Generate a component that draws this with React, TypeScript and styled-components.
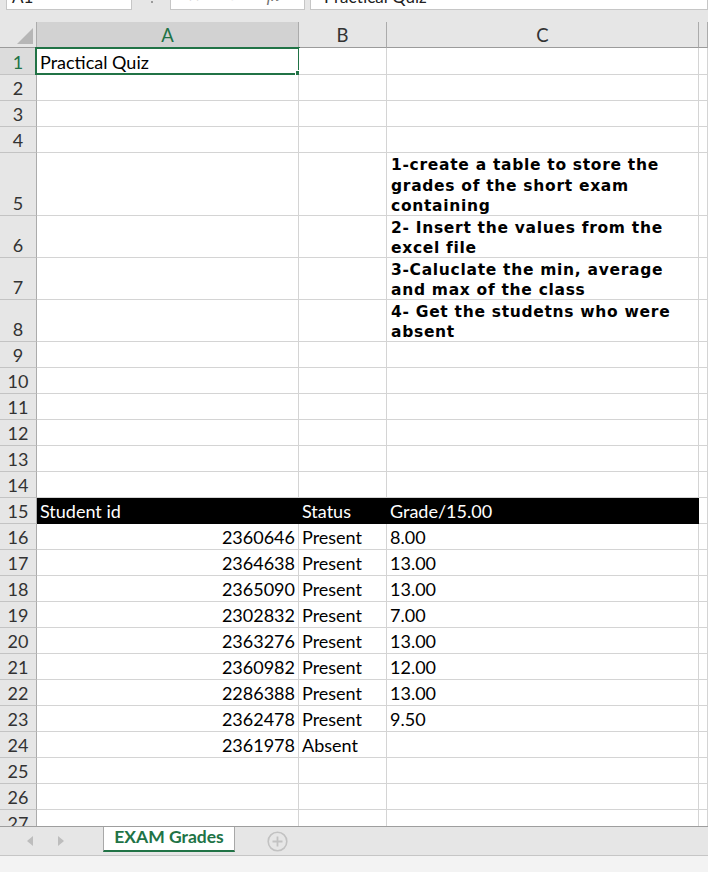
import React from "react";
import styled, { createGlobalStyle } from "styled-components";

const GREEN = "#217346";
const GRID = "#d4d4d4";
const HEAD_BG = "#e6e6e6";
const HEAD_SEL = "#d2d2d2";
const CELL_FONT = `Lato, "Open Sans", "Liberation Sans", sans-serif`;
const COLS = "37px 262px 88px 312px 1fr";

const GlobalStyle = createGlobalStyle`
  html, body { margin: 0; padding: 0; background: ${HEAD_BG}; overflow: hidden; }
  #root { width: 708px; height: 872px; }
`;

const Window = styled.div`
  width: 708px;
  height: 872px;
  display: flex;
  flex-direction: column;
  background: ${HEAD_BG};
  font-family: ${CELL_FONT};
  overflow: hidden;
`;

/* ---------- formula bar (cut off at the top) ---------- */
const FormulaBar = styled.div`
  flex: none;
  height: 10px;
  margin-bottom: 12px;
  display: flex;
  align-items: flex-end;
  overflow: hidden;
`;

const BarBox = styled.div<{ $w?: number; $ml: number }>`
  flex: ${(p) => (p.$w ? "none" : "1")};
  width: ${(p) => (p.$w ? `${p.$w}px` : "auto")};
  margin-left: ${(p) => p.$ml}px;
  height: 28px;
  box-sizing: border-box;
  background: #fff;
  border: 1px solid #c6c6c6;
  display: flex;
  align-items: center;
  font-size: 17px;
  color: #222;
`;

const BarText = styled.span<{ $pl: number }>`
  padding-left: ${(p) => p.$pl}px;
  white-space: nowrap;
`;

const Grip = styled.div`
  flex: none;
  width: 0;
  height: 18px;
  margin: 0 0 7px 19px;
  border-left: 2px dotted #9a9a9a;
`;

const BarIcon = styled.span<{ $w: number; $c: string }>`
  width: ${(p) => p.$w}px;
  flex: none;
  text-align: center;
  color: ${(p) => p.$c};
  font-size: 16px;
  font-family: "DejaVu Sans", sans-serif;
`;

const FxText = styled.span`
  width: 40px;
  flex: none;
  text-align: center;
  font-family: "Liberation Serif", serif;
  font-style: italic;
  font-size: 17px;
  color: #6e6e6e;
`;

/* ---------- sheet ---------- */
const Sheet = styled.div`
  flex: none;
  height: 804px;
  overflow: hidden;
  background: #fff;
`;

const HeaderRow = styled.div`
  display: grid;
  grid-template-columns: ${COLS};
  height: 26px;
  background: ${HEAD_BG};
`;

const Corner = styled.div`
  box-sizing: border-box;
  border-right: 1px solid #ababab;
  border-bottom: 1px solid #9b9b9b;
  position: relative;
`;

const CornerTriangle = styled.svg`
  position: absolute;
  left: 16px;
  top: 6px;
`;

const ColHead = styled.div<{ $sel?: boolean }>`
  box-sizing: border-box;
  background: ${(p) => (p.$sel ? HEAD_SEL : HEAD_BG)};
  border-right: 1px solid #ababab;
  border-bottom: 1px solid #9b9b9b;
  display: flex;
  align-items: flex-end;
  justify-content: center;
  padding-bottom: 1px;
  font-size: 18.5px;
  line-height: 21px;
  color: ${(p) => (p.$sel ? GREEN : "#333")};
`;

const SheetRow = styled.div<{ $h: number }>`
  display: grid;
  grid-template-columns: ${COLS};
  height: ${(p) => p.$h}px;
`;

const RowHead = styled.div<{ $sel?: boolean }>`
  box-sizing: border-box;
  background: ${(p) => (p.$sel ? "#dcdcdc" : HEAD_BG)};
  border-right: 1px solid #ababab;
  border-bottom: 1px solid #c3c3c3;
  display: flex;
  align-items: flex-end;
  justify-content: center;
  padding-bottom: 2px;
  font-size: 18px;
  line-height: 20px;
  color: ${(p) => (p.$sel ? GREEN : "#333")};
`;

const Cell = styled.div<{ $align?: "left" | "right"; $dark?: boolean }>`
  position: relative;
  box-sizing: border-box;
  border-right: 1px solid ${(p) => (p.$dark ? "#000" : GRID)};
  border-bottom: 1px solid ${(p) => (p.$dark ? "#000" : GRID)};
  background: ${(p) => (p.$dark ? "#000" : "#fff")};
  color: ${(p) => (p.$dark ? "#fff" : "#000")};
  display: flex;
  align-items: flex-end;
  justify-content: ${(p) => (p.$align === "right" ? "flex-end" : "flex-start")};
  padding: 0 3px 2px 3px;
  font-size: 18px;
  line-height: 20px;
  white-space: nowrap;
`;

const NoteCell = styled(Cell)`
  font-family: "DejaVu Sans", Verdana, sans-serif;
  font-weight: bold;
  font-size: 15.5px;
  letter-spacing: 0.7px;
  line-height: 20.6px;
  white-space: normal;
  padding: 0 3px 0 4px;
`;

const NoteText = styled.div`
  margin-bottom: -2px;
`;

const Selection = styled.div`
  position: absolute;
  top: -1px;
  left: -2px;
  right: -2px;
  bottom: -1px;
  border: 2px solid ${GREEN};
  pointer-events: none;
`;

const FillHandle = styled.div`
  position: absolute;
  right: -4px;
  bottom: -4px;
  width: 5px;
  height: 5px;
  background: ${GREEN};
  border: 1px solid #fff;
`;

/* ---------- tabs & status ---------- */
const TabBar = styled.div`
  flex: none;
  height: 30px;
  box-sizing: border-box;
  border-top: 1px solid #9e9e9e;
  border-bottom: 1px solid #c6c6c6;
  background: ${HEAD_BG};
  display: flex;
  align-items: flex-start;
`;

const NavArrows = styled.div`
  width: 103px;
  flex: none;
  height: 28px;
  display: flex;
  align-items: center;
  padding-left: 27px;
  box-sizing: border-box;
  gap: 23px;
`;

const SheetTab = styled.div`
  flex: none;
  width: 132px;
  height: 25px;
  box-sizing: border-box;
  background: #fff;
  border-left: 1px solid #a8a8a8;
  border-right: 1px solid #a8a8a8;
  border-bottom: 2px solid ${GREEN};
  display: flex;
  align-items: center;
  justify-content: center;
  font-weight: bold;
  font-size: 17.5px;
  line-height: 20px;
  color: ${GREEN};
  padding-bottom: 4px;
`;

const AddSheet = styled.svg`
  margin: 4px 0 0 32px;
  flex: none;
`;

const StatusBar = styled.div`
  flex: 1;
  background: #f3f3f3;
`;

const notes: Record<number, string[]> = {
  5: ["1-create a table to store the", "grades of the short exam", "containing"],
  6: ["2- Insert the values from the", "excel file"],
  7: ["3-Caluclate the min, average", "and max of the class"],
  8: ["4- Get the studetns who were", "absent"],
};

const records: [string, string, string][] = [
  ["2360646", "Present", "8.00"],
  ["2364638", "Present", "13.00"],
  ["2365090", "Present", "13.00"],
  ["2302832", "Present", "7.00"],
  ["2363276", "Present", "13.00"],
  ["2360982", "Present", "12.00"],
  ["2286388", "Present", "13.00"],
  ["2362478", "Present", "9.50"],
  ["2361978", "Absent", ""],
];

const rowHeight = (r: number) => {
  if (r === 1) return 27;
  if (r === 5) return 63;
  if (r >= 6 && r <= 8) return 42;
  return 26;
};

export default function App() {
  const rows = Array.from({ length: 27 }, (_, i) => i + 1);
  return (
    <Window>
      <GlobalStyle />
      <FormulaBar>
        <BarBox $w={126} $ml={6}>
          <BarText $pl={5}>A1</BarText>
        </BarBox>
        <Grip />
        <BarBox $w={135} $ml={17}>
          <BarIcon $w={46} $c="#c4c4c4">✕</BarIcon>
          <BarIcon $w={36} $c="#c4c4c4">✓</BarIcon>
          <FxText>fx</FxText>
        </BarBox>
        <BarBox $ml={5}>
          <BarText $pl={13}>Practical Quiz</BarText>
        </BarBox>
      </FormulaBar>

      <Sheet>
        <HeaderRow>
          <Corner>
            <CornerTriangle width="18" height="17" viewBox="0 0 18 17">
              <polygon points="17,0 17,16 1,16" fill="#b6b6b6" />
            </CornerTriangle>
          </Corner>
          <ColHead $sel>A</ColHead>
          <ColHead>B</ColHead>
          <ColHead>C</ColHead>
          <ColHead />
        </HeaderRow>
        {rows.map((r) => {
          const rec = r >= 16 && r <= 24 ? records[r - 16] : null;
          const dark = r === 15;
          return (
            <SheetRow key={r} $h={rowHeight(r)}>
              <RowHead $sel={r === 1}>{r}</RowHead>
              <Cell $dark={dark} $align={rec ? "right" : "left"}>
                {r === 1 && "Practical Quiz"}
                {dark && "Student id"}
                {rec && rec[0]}
                {r === 1 && (
                  <Selection>
                    <FillHandle />
                  </Selection>
                )}
              </Cell>
              <Cell $dark={dark}>
                {dark && "Status"}
                {rec && rec[1]}
              </Cell>
              {notes[r] ? (
                <NoteCell>
                  <NoteText>
                    {notes[r].map((l, i) => (
                      <div key={i}>{l}</div>
                    ))}
                  </NoteText>
                </NoteCell>
              ) : (
                <Cell $dark={dark}>
                  {dark && "Grade/15.00"}
                  {rec && rec[2]}
                </Cell>
              )}
              <Cell />
            </SheetRow>
          );
        })}
      </Sheet>

      <TabBar>
        <NavArrows>
          <svg width="7" height="10" viewBox="0 0 7 10">
            <polygon points="6,0 6,10 0,5" fill="#bdbdbd" />
          </svg>
          <svg width="7" height="10" viewBox="0 0 7 10">
            <polygon points="1,0 1,10 7,5" fill="#bdbdbd" />
          </svg>
        </NavArrows>
        <SheetTab>EXAM Grades</SheetTab>
        <AddSheet width="21" height="21" viewBox="0 0 21 21">
          <circle cx="10.5" cy="10.5" r="9.3" fill="none" stroke="#c2c2c2" strokeWidth="1.6" />
          <path d="M10.5 5.5v10M5.5 10.5h10" stroke="#c2c2c2" strokeWidth="1.8" />
        </AddSheet>
      </TabBar>
      <StatusBar />
    </Window>
  );
}
